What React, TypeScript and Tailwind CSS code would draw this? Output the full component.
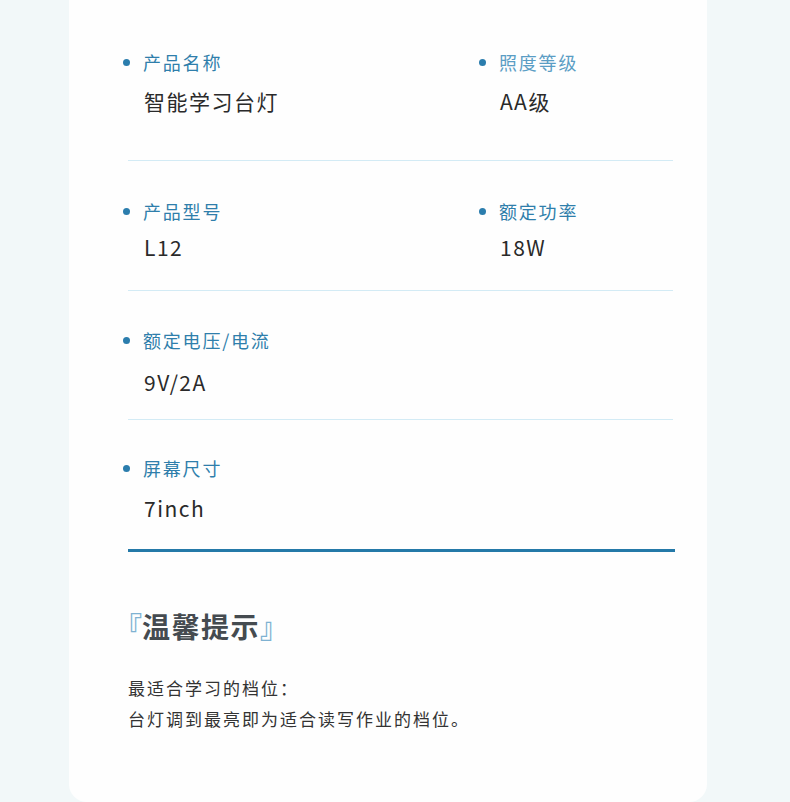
import React from "react";

const font = { fontFamily: '"Noto Sans CJK SC", "Noto Sans", sans-serif' };

type Spec = { label: string; value: string; labelClass?: string };

function Field({ spec, bulletGap }: { spec: Spec; bulletGap: string }) {
  return (
    <div className="flex items-center h-[28px]">
      <span className="w-[7px] h-[7px] rounded-full bg-[#2b7dad] shrink-0" />
      <span
        className={`${bulletGap} text-[18px] tracking-[1.8px] leading-[28px] ${
          spec.labelClass ?? "text-[#2f7eab]"
        }`}
      >
        {spec.label}
      </span>
    </div>
  );
}

function Row({
  left,
  right,
  pad,
  gap,
  divider,
}: {
  left: Spec;
  right?: Spec;
  pad: string;
  gap: string;
  divider: React.ReactNode;
}) {
  return (
    <>
      <div className={`flex ${pad}`}>
        <div className="w-[356px] -ml-[5px]">
          <Field spec={left} bulletGap="ml-[13px]" />
          <div className={`${gap} pl-[21px] h-[30px] leading-[30px] text-[21px] tracking-[1.5px] text-[#2a2a2a]`}>
            {left.value}
          </div>
        </div>
        {right && (
          <div className="flex-1">
            <Field spec={right} bulletGap="ml-[13px]" />
            <div className={`${gap} pl-[21px] h-[30px] leading-[30px] text-[21px] tracking-[1.5px] text-[#2a2a2a]`}>
              {right.value}
            </div>
          </div>
        )}
      </div>
      {divider}
    </>
  );
}

export default function App() {
  const thin = <div className="h-px bg-[#d3ebf5] mr-[34px]" />;
  return (
    <div className="h-[802px] overflow-hidden bg-[#f2f8f9]" style={font}>
      <div className="ml-[69px] w-[638px] h-[802px] bg-[#fefefe] rounded-b-[18px] pl-[59px]">
        <Row
          left={{ label: "产品名称", value: "智能学习台灯" }}
          right={{ label: "照度等级", value: "AA级", labelClass: "text-[#5a9dc4]" }}
          pad="pt-[48px] pb-[44px]"
          gap="mt-[10px]"
          divider={thin}
        />
        <Row
          left={{ label: "产品型号", value: "L12" }}
          right={{ label: "额定功率", value: "18W" }}
          pad="pt-[36px] pb-[28px]"
          gap="mt-[7px]"
          divider={thin}
        />
        <Row
          left={{ label: "额定电压/电流", value: "9V/2A" }}
          pad="pt-[35px] pb-[22px]"
          gap="mt-[13px]"
          divider={thin}
        />
        <Row
          left={{ label: "屏幕尺寸", value: "7inch" }}
          pad="pt-[34px] pb-[26px]"
          gap="mt-[11px]"
          divider={<div className="h-[3px] bg-[#2479a8] mr-[32px]" />}
        />

        <div className="mt-[56px] -ml-[14px] h-[36px] leading-[36px] text-[28px] font-bold text-[#454b50]">
          <span className="text-[#7fb2d2]">『</span>
          <span className="tracking-[1.5px]">温馨提示</span>
          <span className="text-[#7fb2d2]">』</span>
        </div>

        <div className="mt-[28px] text-[17px] leading-[31px] tracking-[2px] text-[#333333]">
          <p>最适合学习的档位：</p>
          <p>台灯调到最亮即为适合读写作业的档位。</p>
        </div>
      </div>
    </div>
  );
}
